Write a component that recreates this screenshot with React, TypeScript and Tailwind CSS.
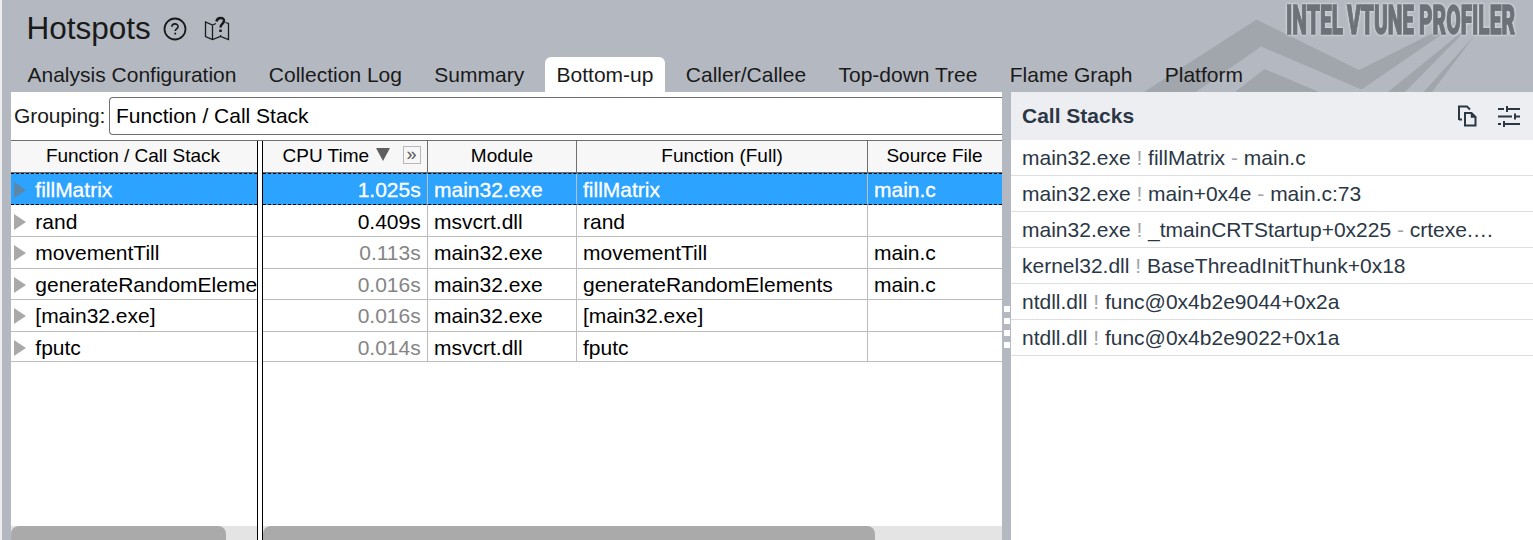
import React from 'react';

const tabs = ['Analysis Configuration', 'Collection Log', 'Summary', 'Bottom-up', 'Caller/Callee', 'Top-down Tree', 'Flame Graph', 'Platform'];

const rows = [
  { name: 'fillMatrix', time: '1.025s', module: 'main32.exe', full: 'fillMatrix', src: 'main.c', h: 'h-8', pad: 'pt-[2px]', tone: 'text-white' },
  { name: 'rand', time: '0.409s', module: 'msvcrt.dll', full: 'rand', src: '', h: 'h-8', pad: 'pt-[2px]', tone: 'text-black' },
  { name: 'movementTill', time: '0.113s', module: 'main32.exe', full: 'movementTill', src: 'main.c', h: 'h-8', pad: '', tone: 'text-[#858585]' },
  { name: 'generateRandomElements', time: '0.016s', module: 'main32.exe', full: 'generateRandomElements', src: 'main.c', h: 'h-[31px]', pad: 'pt-[2px]', tone: 'text-[#858585]' },
  { name: '[main32.exe]', time: '0.016s', module: 'main32.exe', full: '[main32.exe]', src: '', h: 'h-8', pad: '', tone: 'text-[#858585]' },
  { name: 'fputc', time: '0.014s', module: 'msvcrt.dll', full: 'fputc', src: '', h: 'h-[30px]', pad: 'pt-[2px]', tone: 'text-[#858585]' },
];

const stacks = [
  ['main32.exe', 'fillMatrix', 'main.c'],
  ['main32.exe', 'main+0x4e', 'main.c:73'],
  ['main32.exe', '_tmainCRTStartup+0x225', 'crtexe.…'],
  ['kernel32.dll', 'BaseThreadInitThunk+0x18', ''],
  ['ntdll.dll', 'func@0x4b2e9044+0x2a', ''],
  ['ntdll.dll', 'func@0x4b2e9022+0x1a', ''],
];

const rowBase = 'flex shrink-0 items-center';
const selected = 'border-y border-dashed border-black bg-[#2ca3ff] text-white [-webkit-text-stroke:0.3px_white]';
const plain = 'border-b border-[#bdbdbd] text-black';
const headCell = 'flex items-center justify-center';

function Brand() {
  return (
    <svg className="pointer-events-none absolute top-0 right-0 h-[92px] w-[403px]" viewBox="1130 0 403 92">
      <g fill="#a1a5ac">
        <path d="M1144 92L1256.500 19.500L1359 70L1473 13L1361.500 89.500L1261 46.500L1196 92Z" />
        <path d="M1235 92L1264.500 69L1319 92Z" />
        <path d="M1388 92L1473 23L1405 92Z" />
        <path d="M1423.500 92L1475 35L1432 92Z" />
      </g>
      <g className="[filter:drop-shadow(0_0_1px_#d8dbdf)_drop-shadow(0_0_1px_#d0d3d8)]" fontSize="40" fontWeight="900" fontFamily="Roboto, sans-serif" fill="#6d7178" stroke="#6d7178" strokeWidth="1.3">
        <text x="1286" y="33.500" textLength="57" lengthAdjust="spacingAndGlyphs">INTEL</text>
        <text x="1347" y="33.500" textLength="67" lengthAdjust="spacingAndGlyphs">VTUNE</text>
        <text x="1419" y="33.500" textLength="96" lengthAdjust="spacingAndGlyphs">PROFILER</text>
      </g>
    </svg>
  );
}

function Header() {
  return (
    <header className="relative flex h-[92px] shrink-0 flex-col justify-between bg-[#b4b9c1] text-[#1a1a1a]">
      <Brand />
      <div className="relative flex h-[57px] items-center pl-[24.500px]">
        <h1 className="text-[31.500px] leading-none">Hotspots</h1>
        <svg className="ml-3 h-6 w-6" viewBox="0 0 24 24" fill="none" stroke="#1a1a1a" strokeWidth="1.8">
          <circle cx="12" cy="12" r="10.500" />
          <path d="M8.900 9.800C8.900 6 15.100 6 15.100 9.500C15.100 11.700 12.200 11.900 12.200 14" strokeWidth="1.600" />
          <path d="M12.200 15.700V17.500" />
        </svg>
        <svg className="ml-4 h-7 w-7" viewBox="0 0 28 28" fill="none" stroke="#1a1a1a" strokeWidth="1.300">
          <path d="M13 8.500L9.500 10L2.500 7V21.500L9.500 24.500L17.500 21.500L25.500 24.500V8.500L22.500 7.500M9.500 10V24.500M17.500 20V21.500" />
          <path d="M13.500 6.500C14 1.800 21.500 1.800 21 6C20.700 9 17.500 9 17.500 12.500" strokeWidth="2.500" />
          <path d="M17.500 14.500V17" strokeWidth="2.500" />
        </svg>
      </div>
      <nav className="relative flex h-[35px] pl-[13.500px] text-[21px]">
        {tabs.map((t) => (
          <div key={t} className={'flex items-center rounded-t-[6px] px-[12px] mr-[8.400px] whitespace-nowrap ' + (t === 'Bottom-up' ? 'bg-white' : '')}>{t}</div>
        ))}
      </nav>
    </header>
  );
}

export default function App() {
  return (
    <div className="h-[540px] w-[1533px] overflow-hidden border-l-2 border-[#eeeeee] bg-white font-['Liberation_Sans',Arial,sans-serif] flex flex-col">
      <Header />
      <div className="flex min-h-0 flex-1">
        <div className="w-[9px] shrink-0 bg-[#b4b9c1]" />
        <main className="flex w-[991px] shrink-0 flex-col overflow-hidden">
          <div className="flex h-12 shrink-0 items-center pl-[3px] text-[21px] text-[#1a1a1a]">
            <span className="w-[95px] shrink-0 tracking-[-0.1px]">Grouping:</span>
            <div className="flex h-[38px] flex-1 items-center rounded-l-[4px] border border-r-0 border-[#6f6f6f] pl-[6px] text-black">Function / Call Stack</div>
          </div>
          <div className="flex min-h-0 flex-1 border-t border-[#6f6f6f] text-[21px]">
            <section className="flex w-[246px] shrink-0 flex-col overflow-hidden">
              <div className={headCell + ' h-8 shrink-0 border-b border-[#6f6f6f] bg-[#f7f7f7] pr-[2px] text-[19px]'}>Function / Call Stack</div>
              {rows.map((r, i) => (
                <div key={r.name} className={rowBase + ' ' + r.h + ' ' + r.pad + ' ' + (i === 0 ? selected : plain)}>
                  <svg className="ml-[3px] mr-[9.300px] h-4 w-3 shrink-0" viewBox="0 0 12 16"><path d="M0 0L12 8L0 16Z" fill={i === 0 ? '#5d87a9' : '#a9a9a9'} /></svg>
                  <span className="whitespace-nowrap">{r.name}</span>
                </div>
              ))}
              <div className="mt-auto h-[14px] bg-[#e4e4e4]"><div className="h-full w-[215px] rounded-t-[8px] bg-[#aaaaaa]" /></div>
            </section>
            <div className="w-[6px] shrink-0 border-x border-black bg-white" />
            <section className="flex w-[739px] shrink-0 flex-col overflow-hidden">
              <div className="flex h-8 shrink-0 border-b border-[#6f6f6f] bg-[#f7f7f7] text-[19px]">
                <div className="flex w-[165px] items-center border-r border-[#6f6f6f] pl-[19.500px]">
                  CPU Time
                  <svg className="mb-1 ml-[6.500px] h-[13px] w-[14px]" viewBox="0 0 14 13"><path d="M0 0H14L7 13Z" fill="#5f5f5f" /></svg>
                  <span className="mb-[3px] ml-[13px] flex h-[18px] w-[18px] items-center justify-center border border-[#b8b8b8] pb-[3px] text-[18px] leading-none text-[#555]">»</span>
                </div>
                <div className={headCell + ' w-[149px] border-r border-[#6f6f6f]'}>Module</div>
                <div className={headCell + ' w-[291px] border-r border-[#6f6f6f]'}>Function (Full)</div>
                <div className={headCell + ' flex-1 pr-px'}>Source File</div>
              </div>
              {rows.map((r, i) => (
                <div key={r.name} className={rowBase + ' ' + r.h + ' ' + (i === 0 ? selected : plain)}>
                  <div className={'flex h-full w-[165px] items-center justify-end border-r border-[#bdbdbd] pr-[6.300px] ' + r.pad + ' ' + r.tone}>{r.time}</div>
                  <div className={'flex h-full w-[149px] items-center border-r border-[#bdbdbd] pl-[6px] ' + r.pad}>{r.module}</div>
                  <div className={'flex h-full w-[291px] items-center border-r border-[#bdbdbd] pl-[6px] ' + r.pad}>{r.full}</div>
                  <div className={'flex h-full flex-1 items-center pl-[6px] ' + r.pad}>{r.src}</div>
                </div>
              ))}
              <div className="mt-auto h-[14px] bg-[#e4e4e4]"><div className="h-full w-[612px] rounded-t-[8px] bg-[#aaaaaa]" /></div>
            </section>
          </div>
        </main>
        <div className="flex w-[9px] shrink-0 flex-col items-center gap-[6px] bg-[#b4b9c1] pt-[214px]">
          {[0, 1, 2, 3].map((n) => <i key={n} className="ml-px h-[6px] w-[6px] bg-white" />)}
        </div>
        <aside className="flex min-w-0 flex-1 flex-col text-[21px] text-[#2b3745]">
          <div className="flex h-12 shrink-0 items-center bg-[#edeef2] pl-[11px]">
            <h2 className="flex-1 font-bold">Call Stacks</h2>
            <svg className="mr-[21px] h-[22px] w-5" viewBox="0 0 20 22" fill="none" stroke="#2b3745" strokeWidth="2">
              <path d="M2 15V1.500H10L13 4.500M2 14.500H5" />
              <path d="M8 8H14.500L18.500 12V20.500H8Z" />
              <path d="M14 8L18.500 12.500H14Z" fill="#2b3745" strokeWidth="0.5" />
            </svg>
            <svg className="mr-[13px] h-[22px] w-[22px]" viewBox="0 0 22 22" fill="none" stroke="#2b3745" strokeWidth="2">
              <path d="M0 4H6M9 4H22M9 1V7M0 11.500H14M17 11.500H22M17 8.500V14.500M0 19H3M6 19H22M6 16V22" />
            </svg>
          </div>
          {stacks.map(([mod, fn, src]) => (
            <div key={fn} className="flex h-9 shrink-0 items-center border-b border-[#dcdee1] pl-[11px]">
              <span className="whitespace-nowrap">{mod} <span className="text-[#a0a5ab]">!</span> {fn}{src && <> <span className="text-[#a0a5ab]">-</span> {src}</>}</span>
            </div>
          ))}
        </aside>
      </div>
    </div>
  );
}
